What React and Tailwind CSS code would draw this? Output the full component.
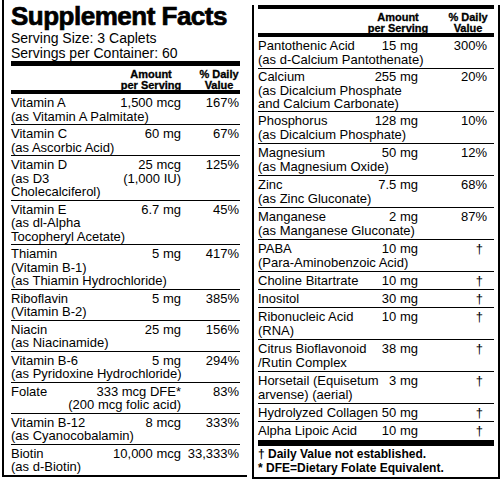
import React from "react";

const left = [
  [["Vitamin A", "1,500 mcg", "167%"], ["(as Vitamin A Palmitate)", "", ""]],
  [["Vitamin C", "60 mg", "67%"], ["(as Ascorbic Acid)", "", ""]],
  [["Vitamin D", "25 mcg", "125%"], ["(as D3", "(1,000 IU)", ""], ["Cholecalciferol)", "", ""]],
  [["Vitamin E", "6.7 mg", "45%"], ["(as dl-Alpha", "", ""], ["Tocopheryl Acetate)", "", ""]],
  [["Thiamin", "5 mg", "417%"], ["(Vitamin B-1)", "", ""], ["(as Thiamin Hydrochloride)", "", ""]],
  [["Riboflavin", "5 mg", "385%"], ["(Vitamin B-2)", "", ""]],
  [["Niacin", "25 mg", "156%"], ["(as Niacinamide)", "", ""]],
  [["Vitamin B-6", "5 mg", "294%"], ["(as Pyridoxine Hydrochloride)", "", ""]],
  [["Folate", "333 mcg DFE*", "83%"], ["", "(200 mcg folic acid)", ""]],
  [["Vitamin B-12", "8 mcg", "333%"], ["(as Cyanocobalamin)", "", ""]],
  [["Biotin", "10,000 mcg", "33,333%"], ["(as d-Biotin)", "", ""]],
];

const right = [
  [["Pantothenic Acid", "15 mg", "300%"], ["(as d-Calcium Pantothenate)", "", ""]],
  [["Calcium", "255 mg", "20%"], ["(as Dicalcium Phosphate", "", ""], ["and Calcium Carbonate)", "", ""]],
  [["Phosphorus", "128 mg", "10%"], ["(as Dicalcium Phosphate)", "", ""]],
  [["Magnesium", "50 mg", "12%"], ["(as Magnesium Oxide)", "", ""]],
  [["Zinc", "7.5 mg", "68%"], ["(as Zinc Gluconate)", "", ""]],
  [["Manganese", "2 mg", "87%"], ["(as Manganese Gluconate)", "", ""]],
  [["PABA", "10 mg", "†"], ["(Para-Aminobenzoic Acid)", "", ""]],
  [["Choline Bitartrate", "10 mg", "†"]],
  [["Inositol", "30 mg", "†"]],
  [["Ribonucleic Acid", "10 mg", "†"], ["(RNA)", "", ""]],
  [["Citrus Bioflavonoid", "38 mg", "†"], ["/Rutin Complex", "", ""]],
  [["Horsetail (Equisetum", "3 mg", "†"], ["arvense) (aerial)", "", ""]],
  [["Hydrolyzed Collagen", "50 mg", "†"]],
  [["Alpha Lipoic Acid", "10 mg", "†"]],
];

function Line({ n, a, p, side }) {
  const pctCls =
    side === "left"
      ? "w-[59px] pr-[1px] shrink-0 text-right"
      : p === "†"
      ? "w-[76px] pr-[11px] shrink-0 text-right"
      : "w-[76px] pr-[7px] shrink-0 text-right";
  return (
    <div className="flex whitespace-nowrap">
      <div className="flex-1 min-w-0">{n}</div>
      <div className="shrink-0 text-right">{a}</div>
      <div className={pctCls}>{p}</div>
    </div>
  );
}

export default function App() {
  return (
    <div className="w-[500px] h-[485px] bg-white text-black font-['Liberation_Sans',Arial,sans-serif] flex items-start pl-[2px] overflow-hidden">
      {/* Left panel */}
      <div className="w-[245px] border-l-2 border-b-2 border-black pl-[7px] pr-[7px]">
        <div className="pt-[2px] text-[26px] leading-[29px] font-bold tracking-[-0.5px] whitespace-nowrap [-webkit-text-stroke:0.7px_black]">
          Supplement Facts
        </div>
        <div className="text-[14px] leading-[15px]">
          <div>Serving Size: 3 Caplets</div>
          <div>Servings per Container: 60</div>
        </div>
        <div className="h-[5px] bg-black" />
        <div className="flex justify-end pt-[3px] text-[11px] leading-[10.5px] font-bold text-center [-webkit-text-stroke:0.3px_black]">
          <div className="w-[72px]">
            Amount
            <br />
            per Serving
          </div>
          <div className="w-[42px] ml-[11px]">
            % Daily
            <br />
            Value
          </div>
        </div>
        <div className="h-[4px] bg-black" />
        <div className="text-[13px] leading-[13.5px]">
          {left.map((row, i) => (
            <div
              key={i}
              className={
                i < left.length - 1
                  ? "pt-[2px] pb-[1px] border-b border-black"
                  : "pt-[2px] pb-[1px]"
              }
            >
              {row.map((l, j) => (
                <Line key={j} n={l[0]} a={l[1]} p={l[2]} side="left" />
              ))}
            </div>
          ))}
        </div>
      </div>

      {/* Right panel */}
      <div className="ml-[5px] mt-[5px] w-[248px] border-l-2 border-r-2 border-b-2 border-black pl-[4px] pr-[4px]">
        <div className="h-[4px] bg-black" />
        <div className="flex justify-end pt-[3px] pr-[4px] text-[11px] leading-[10.5px] font-bold text-center [-webkit-text-stroke:0.3px_black]">
          <div className="w-[72px]">
            Amount
            <br />
            per Serving
          </div>
          <div className="w-[44px] ml-[12px]">
            % Daily
            <br />
            Value
          </div>
        </div>
        <div className="h-[4px] bg-black" />
        <div className="text-[13px] leading-[14px]">
          {right.map((row, i) => (
            <div
              key={i}
              className={
                i === 1
                  ? "pt-[1px] border-b border-black leading-[13.5px]"
                  : i < right.length - 1
                  ? "pt-[2px] pb-[1px] border-b border-black"
                  : "pt-[2px] pb-[1px]"
              }
            >
              {row.map((l, j) => (
                <Line key={j} n={l[0]} a={l[1]} p={l[2]} side="right" />
              ))}
            </div>
          ))}
        </div>
        <div className="mt-[1px] h-[6px] bg-black" />
        <div className="pt-[1px] pb-[2px] text-[12px] leading-[14px] font-bold whitespace-nowrap">
          <div>† Daily Value not established.</div>
          <div>* DFE=Dietary Folate Equivalent.</div>
        </div>
      </div>
    </div>
  );
}
